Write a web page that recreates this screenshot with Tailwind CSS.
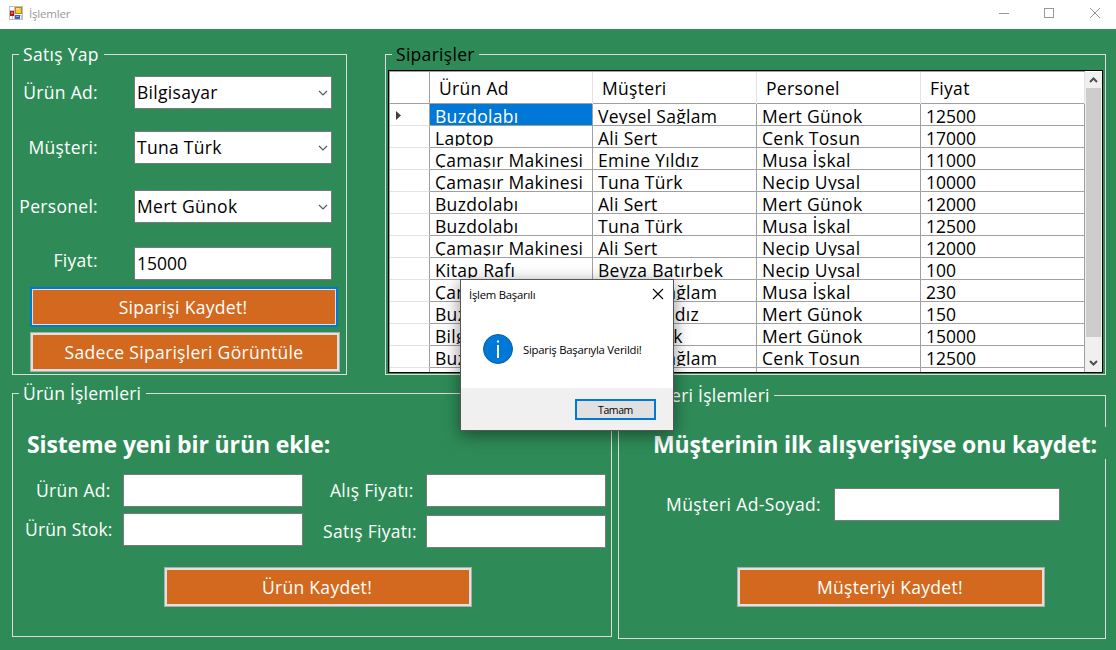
<!DOCTYPE html>
<html lang="tr">
<head>
<meta charset="utf-8">
<title>İşlemler</title>
<script src="https://cdn.jsdelivr.net/npm/@tailwindcss/browser@4"></script>
</head>
<body class="relative flex h-[650px] w-[1116px] flex-col overflow-hidden bg-[#2e8b57] font-['Open_Sans','Noto_Sans',sans-serif] text-[17.5px] leading-[24px] tracking-[0.3px] text-white">

<header class="flex h-[29px] shrink-0 items-center bg-white pl-[9px] text-[#999999]">
  <svg class="mt-[-3px] h-[14px] w-[14px]" viewBox="0 0 14 14" shape-rendering="crispEdges">
    <rect x="0.5" y="0.5" width="13" height="13" fill="#fff" stroke="#bdbdbd"/>
    <path d="M5.500 0V14M3.500 9V14M0 4.500H6M0 9.500H14M12.500 9V14" stroke="#c4c4c4" fill="none"/>
    <rect x="1" y="5" width="4" height="5" fill="#b01812"/><rect x="2" y="6" width="2" height="2" fill="#e8665c"/>
    <rect x="6" y="1" width="7" height="7" fill="#b98a10"/><rect x="7" y="2" width="5" height="5" fill="#fbc737"/><rect x="7" y="2" width="3" height="2" fill="#fde08a"/>
    <rect x="6" y="9" width="5" height="4" fill="#2f62c4"/><rect x="7" y="10" width="3" height="1" fill="#7ea6ee"/>
  </svg>
  <span class="ml-[6px] mt-[-1px] text-[11.5px] leading-[16px] tracking-[-0.2px]">İşlemler</span>
  <div class="ml-auto flex pb-[3px]">
    <svg class="mt-[1px] h-[27px] w-[46px]" viewBox="0 0 46 27" stroke="#999" fill="none"><path d="M18 13.500H28"/></svg>
    <svg class="mt-[1px] h-[27px] w-[45px]" viewBox="0 0 45 27" stroke="#999" fill="none"><rect x="17.500" y="8.500" width="9" height="9"/></svg>
    <svg class="mt-[1px] h-[27px] w-[44px]" viewBox="0 0 44 27" stroke="#999" fill="none"><path d="M18 8L28 18M28 8L18 18"/></svg>
  </div>
</header>

<main class="flex flex-col px-[12px] pt-[13px]">
  <section class="flex h-[333px]">
    <fieldset class="h-[333px] w-[335px] shrink-0 border border-[#dcdcdc]">
      <legend class="ml-[6px] h-[25px] w-[85px] pl-[4px] leading-[25px]"><span>Satış Yap</span></legend>
      <div class="mt-[9px] flex h-[33px] items-center pr-[14px]">
        <span class="w-[85px] pb-[2px] text-right">Ürün Ad:</span>
        <div class="ml-auto flex h-[33px] w-[198px] items-center border border-[#7a7a7a] bg-white pl-[2px] pr-[3px] text-black"><span class="pb-[2px]">Bilgisayar</span><svg class="ml-auto h-[6px] w-[10px]" viewBox="0 0 10 6" fill="none" stroke="#555" stroke-width="1.100"><path d="M1 1L5 5L9 1"/></svg></div>
      </div>
      <div class="mt-[22px] flex h-[33px] items-center pr-[14px]">
        <span class="w-[85px] pb-[2px] text-right">Müşteri:</span>
        <div class="ml-auto flex h-[33px] w-[198px] items-center border border-[#7a7a7a] bg-white pl-[2px] pr-[3px] text-black"><span class="pb-[2px]">Tuna Türk</span><svg class="ml-auto h-[6px] w-[10px]" viewBox="0 0 10 6" fill="none" stroke="#555" stroke-width="1.100"><path d="M1 1L5 5L9 1"/></svg></div>
      </div>
      <div class="mt-[26px] flex h-[33px] items-center pr-[14px]">
        <span class="w-[85px] pb-[2px] text-right">Personel:</span>
        <div class="ml-auto flex h-[33px] w-[198px] items-center border border-[#7a7a7a] bg-white pl-[2px] pr-[3px] text-black"><span class="pb-[2px]">Mert Günok</span><svg class="ml-auto h-[6px] w-[10px]" viewBox="0 0 10 6" fill="none" stroke="#555" stroke-width="1.100"><path d="M1 1L5 5L9 1"/></svg></div>
      </div>
      <div class="mt-[24px] flex h-[33px] items-center pr-[14px]">
        <span class="mt-[-6px] w-[85px] pb-[2px] text-right">Fiyat:</span>
        <div class="ml-auto flex h-[33px] w-[198px] items-center border border-[#7a7a7a] bg-white pl-[2px] tracking-normal text-black"><span class="pb-[2px]">15000</span></div>
      </div>
      <button class="ml-[17px] mt-[7px] flex h-[40px] w-[308px] items-center justify-center border-2 border-[#0078d7] bg-[#d2691e] pr-[2px] tracking-[0.3px] shadow-[inset_0_0_0_1px_#e1e1e1]"><span>Siparişi Kaydet!</span></button>
      <button class="ml-[17px] mt-[5px] flex h-[40px] w-[310px] items-center justify-center border border-[#adadad] bg-[#d2691e] pr-[2px] tracking-[0.3px] shadow-[inset_0_0_0_2px_#e1e1e1]"><span>Sadece Siparişleri Görüntüle</span></button>
    </fieldset>

    <fieldset class="ml-[38px] h-[333px] w-[721px] shrink-0 border border-[#dcdcdc]">
      <legend class="ml-[6px] h-[25px] w-[87px] pl-[4px] leading-[25px] text-black"><span>Siparişler</span></legend>
      <div class="ml-[2px] mt-[3px] flex h-[303px] w-[715px] overflow-hidden border border-black bg-white text-black">
        <div class="w-[696px] shrink-0 overflow-hidden border-l border-t border-[#a0a0a0] [&>div]:grid [&>div]:h-[22px] [&>div]:grid-cols-[40px_163px_164px_164px_164px] [&>div>i]:border-b [&>div>i]:border-r [&>div>i]:border-b-[#e3e3e3] [&>div>i]:border-r-[#a0a0a0] [&>div>p]:h-[22px] [&>div>p]:border-b [&>div>p]:border-r [&>div>p]:border-[#a0a0a0] [&>div>p]:pl-[5px] [&>div>p:last-child]:tracking-normal [&_span]:block [&_span]:h-[20px] [&_span]:overflow-hidden [&_span]:whitespace-nowrap">
          <header class="grid h-[32px] grid-cols-[40px_163px_164px_164px_164px] border-b border-[#a0a0a0] leading-[33px] [&>b]:border-r [&>b]:border-[#e3e3e3] [&>b]:pl-[9px] [&>b]:font-normal">
            <b class="border-[#a0a0a0]!"></b><b>Ürün Ad</b><b>Müşteri</b><b>Personel</b><b>Fiyat</b>
          </header>
          <div><i class="flex items-center pl-[6px] pt-[2px]"><svg class="h-[9px] w-[5px]" viewBox="0 0 5 9"><path d="M0 0L5 4.500L0 9Z" fill="#404040"/></svg></i><p class="bg-[#0078d7] text-white"><span>Buzdolabı</span></p><p><span>Veysel Sağlam</span></p><p><span>Mert Günok</span></p><p><span>12500</span></p></div>
          <div><i></i><p><span>Laptop</span></p><p><span>Ali Sert</span></p><p><span>Cenk Tosun</span></p><p><span>17000</span></p></div>
          <div><i></i><p><span>Çamaşır Makinesi</span></p><p><span>Emine Yıldız</span></p><p><span>Musa İşkal</span></p><p><span>11000</span></p></div>
          <div><i></i><p><span>Çamaşır Makinesi</span></p><p><span>Tuna Türk</span></p><p><span>Necip Uysal</span></p><p><span>10000</span></p></div>
          <div><i></i><p><span>Buzdolabı</span></p><p><span>Ali Sert</span></p><p><span>Mert Günok</span></p><p><span>12000</span></p></div>
          <div><i></i><p><span>Buzdolabı</span></p><p><span>Tuna Türk</span></p><p><span>Musa İşkal</span></p><p><span>12500</span></p></div>
          <div><i></i><p><span>Çamaşır Makinesi</span></p><p><span>Ali Sert</span></p><p><span>Necip Uysal</span></p><p><span>12000</span></p></div>
          <div><i></i><p><span>Kitap Rafı</span></p><p><span>Beyza Batırbek</span></p><p><span>Necip Uysal</span></p><p><span>100</span></p></div>
          <div><i></i><p><span>Çamaşır Makinesi</span></p><p><span>Veysel Sağlam</span></p><p><span>Musa İşkal</span></p><p><span>230</span></p></div>
          <div><i></i><p><span>Buzdolabı</span></p><p><span>Emine Yıldız</span></p><p><span>Mert Günok</span></p><p><span>150</span></p></div>
          <div><i></i><p><span>Bilgisayar</span></p><p><span>Tuna Türk</span></p><p><span>Mert Günok</span></p><p><span>15000</span></p></div>
          <div><i></i><p><span>Buzdolabı</span></p><p><span>Veysel Sağlam</span></p><p><span>Cenk Tosun</span></p><p><span>12500</span></p></div>
          <div><i></i><p></p><p></p><p></p><p></p></div>
        </div>
        <div class="mt-[1px] flex w-[17px] flex-col bg-[#f0f0f0]">
          <svg class="h-[16px] w-[17px]" viewBox="0 0 17 16" fill="none" stroke="#505050" stroke-width="2"><path d="M5 10L8.500 6.500L12 10"/></svg>
          <div class="ml-[1px] h-[249px] w-[15px] bg-[#cdcdcd]"></div>
          <svg class="mt-auto h-[18px] w-[17px]" viewBox="0 0 17 18" fill="none" stroke="#505050" stroke-width="2"><path d="M5 7L8.500 10.500L12 7"/></svg>
        </div>
      </div>
    </fieldset>
  </section>

  <section class="mt-[6px] flex">
    <fieldset class="h-[256px] w-[600px] shrink-0 border border-[#dcdcdc]">
      <legend class="ml-[6px] h-[25px] w-[127px] pl-[4px] leading-[25px] tracking-[0.2px]"><span>Ürün İşlemleri</span></legend>
      <h2 class="ml-[14px] mt-[22px] h-[32px] text-[23px] font-bold leading-[32px] tracking-[-0.12px]"><span>Sisteme yeni bir ürün ekle:</span></h2>
      <div class="mt-[14px] flex">
        <div class="w-[110px] [&>p]:whitespace-nowrap"><p class="mt-[4px] pl-[23px]"><span>Ürün Ad:</span></p><p class="mt-[15px] pl-[12px] tracking-[0.15px]"><span>Ürün Stok:</span></p></div>
        <div class="flex w-[180px] flex-col gap-[6px]"><div class="h-[33px] border border-[#7a7a7a] bg-white"></div><div class="h-[33px] border border-[#7a7a7a] bg-white"></div></div>
        <div class="w-[123px] [&>p]:whitespace-nowrap"><p class="mt-[4px] pl-[27px]"><span>Alış Fiyatı:</span></p><p class="mt-[17px] pl-[20px]"><span>Satış Fiyatı:</span></p></div>
        <div class="flex w-[180px] flex-col gap-[8px]"><div class="h-[33px] border border-[#7a7a7a] bg-white"></div><div class="h-[33px] border border-[#7a7a7a] bg-white"></div></div>
      </div>
      <button class="ml-[151px] mt-[19px] flex h-[40px] w-[308px] items-center justify-center border border-[#adadad] bg-[#d2691e] pr-[2px] tracking-[0.3px] shadow-[inset_0_0_0_2px_#e1e1e1]"><span>Ürün Kaydet!</span></button>
    </fieldset>

    <fieldset class="ml-[6px] mt-[2px] h-[256px] w-[488px] shrink-0 border border-[#dcdcdc]">
      <legend class="ml-[6px] h-[25px] w-[149px] pl-[4px] leading-[25px] tracking-[0.25px]"><span>Müşteri İşlemleri</span></legend>
      <h2 class="relative ml-[32px] mr-[-1px] mt-[19px] h-[32px] whitespace-nowrap bg-[#2e8b57] pl-[2px] text-[23px] font-bold leading-[34px] tracking-[-0.13px]"><span>Müşterinin ilk alışverişiyse onu kaydet:</span></h2>
      <div class="mt-[29px] flex h-[33px] items-center pl-[47px]">
        <span class="w-[168px] whitespace-nowrap pb-[2px] tracking-[0.4px]">Müşteri Ad-Soyad:</span>
        <div class="h-[33px] w-[226px] border border-[#7a7a7a] bg-white"></div>
      </div>
      <button class="ml-[118px] mt-[46px] flex h-[40px] w-[308px] items-center justify-center border border-[#adadad] bg-[#d2691e] pr-[2px] tracking-[0.3px] shadow-[inset_0_0_0_2px_#e1e1e1]"><span>Müşteriyi Kaydet!</span></button>
    </fieldset>
  </section>
</main>

<div role="dialog" class="absolute left-[460px] top-[279px] flex h-[152px] w-[214px] flex-col border border-[#444]/90 bg-white text-[11.300px] leading-[16px] tracking-[-0.23px] text-black shadow-[0_4px_16px_rgba(0,0,0,0.45)]">
  <div class="flex h-[29px] items-center justify-between pl-[8px] pr-[9px]">
    <span>İşlem Başarılı</span>
    <svg class="mt-[-1px] h-[12px] w-[12px]" viewBox="0 0 12 12" fill="none" stroke="#000" stroke-width="1.100"><path d="M1 1L11 11M11 1L1 11"/></svg>
  </div>
  <div class="flex h-[79px] items-center pl-[22px]">
    <svg class="h-[30px] w-[30px]" viewBox="0 0 30 30"><circle cx="15" cy="15" r="14.500" fill="#0078d7" stroke="#0b5ea3"/><path d="M14 6.500h2v2h-2zM14 11h2v13h-2z" fill="#fff"/></svg>
    <span class="ml-[10px] mt-[2px] whitespace-nowrap">Sipariş Başarıyla Verildi!</span>
  </div>
  <div class="flex flex-1 justify-end bg-[#f0f0f0] pr-[17px] pt-[11px]">
    <button class="flex h-[21px] w-[81px] items-center justify-center border-2 border-[#0078d7] bg-[#e1e1e1] pt-px text-[10.500px] tracking-[-0.4px]"><span>Tamam</span></button>
  </div>
</div>
</body>
</html>
